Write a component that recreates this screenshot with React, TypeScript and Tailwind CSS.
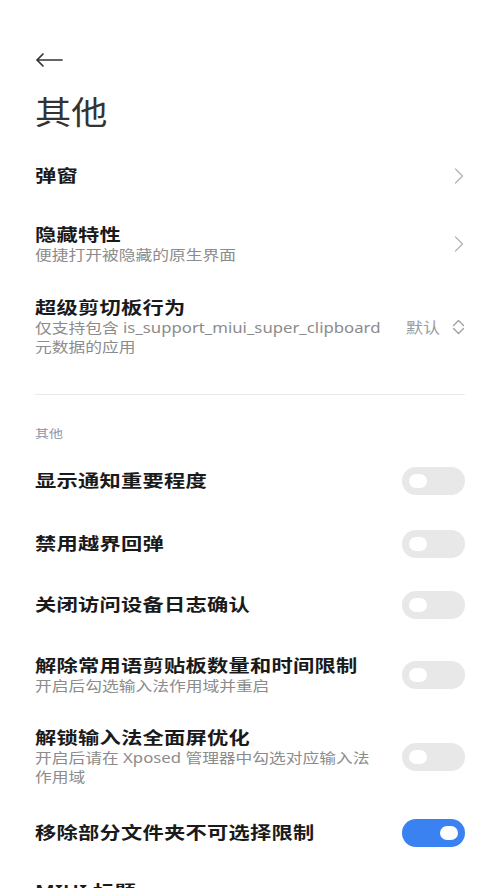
import React from "react";

const font = { fontFamily: '"Noto Sans", "Noto Sans CJK SC", sans-serif' };

function Chevron() {
  return (
    <svg width="10" height="16" viewBox="0 0 10 16" fill="none" className="mr-[1px]">
      <polyline points="1.5,1 8.5,8 1.5,15" stroke="#b5b5b5" strokeWidth="1.4" strokeLinecap="round" strokeLinejoin="round" />
    </svg>
  );
}

function UpDown() {
  return (
    <svg width="13" height="16" viewBox="0 0 13 16" fill="none">
      <polyline points="1.5,6.5 6.5,1.5 11.5,6.5" stroke="#a0a0a0" strokeWidth="1.4" strokeLinecap="round" strokeLinejoin="round" />
      <polyline points="1.5,9.5 6.5,14.5 11.5,9.5" stroke="#a0a0a0" strokeWidth="1.4" strokeLinecap="round" strokeLinejoin="round" />
    </svg>
  );
}

function Toggle({ on }: { on?: boolean }) {
  return (
    <div
      className={
        "flex h-[28px] w-[63px] shrink-0 items-center rounded-full px-[7px] " +
        (on ? "justify-end bg-[#3a81f1]" : "justify-start bg-[#e8e8e8]")
      }
    >
      <div className="h-[14px] w-[18px] rounded-full bg-white" />
    </div>
  );
}

function Title({ children }: { children: React.ReactNode }) {
  return (
    <div className="origin-left scale-x-[1.25] whitespace-nowrap text-[17px] leading-[22px] font-semibold tracking-[0.2px] text-[#1a1a1a]">
      {children}
    </div>
  );
}

function Sub({ children }: { children: React.ReactNode }) {
  return (
    <div className="origin-left scale-x-[1.24] whitespace-nowrap text-[13.5px] leading-[19px] text-[#8c8c8c]">
      {children}
    </div>
  );
}

export default function App() {
  return (
    <div className="min-h-[888px] w-[500px] overflow-hidden bg-white px-[35px]" style={font}>
      <div className="flex h-[28px] items-center mt-[46px]">
        <svg width="28" height="14" viewBox="0 0 28 14" fill="none">
          <path d="M27 7H2M8 1L2 7L8 13" stroke="#333" strokeWidth="1.7" strokeLinecap="round" strokeLinejoin="round" />
        </svg>
      </div>
      <div className="mt-[18px] origin-left scale-x-[1.13] text-[32px] leading-[40px] text-[#333]">其他</div>

      <div className="mt-[16px] flex h-[55px] items-center justify-between">
        <Title>弹窗</Title>
        <Chevron />
      </div>

      <div className="flex h-[82px] items-center justify-between">
        <div>
          <Title>隐藏特性</Title>
          <Sub>便捷打开被隐藏的原生界面</Sub>
        </div>
        <Chevron />
      </div>

      <div className="flex h-[84px] items-center justify-between">
        <div>
          <Title>超级剪切板行为</Title>
          <Sub>
            仅支持包含 is_support_miui_super_clipboard
            <br />
            元数据的应用
          </Sub>
        </div>
        <div className="flex items-center gap-[12px] self-start pt-[32px]">
          <span className="origin-right scale-x-[1.17] text-[14.5px] leading-[20px] text-[#9a9a9a]">默认</span>
          <UpDown />
        </div>
      </div>

      <div className="mt-[25px] h-px bg-[#ebebeb]" />

      <div className="mt-[31px] origin-left scale-x-[1.27] text-[11px] leading-[16px] text-[#8e94ae]">其他</div>

      <div className="mt-[7px] flex h-[64px] items-center justify-between">
        <Title>显示通知重要程度</Title>
        <Toggle />
      </div>

      <div className="flex h-[62px] items-center justify-between">
        <Title>禁用越界回弹</Title>
        <Toggle />
      </div>

      <div className="flex h-[60px] items-center justify-between">
        <Title>关闭访问设备日志确认</Title>
        <Toggle />
      </div>

      <div className="flex h-[80px] items-center justify-between">
        <div>
          <Title>解除常用语剪贴板数量和时间限制</Title>
          <Sub>开启后勾选输入法作用域并重启</Sub>
        </div>
        <Toggle />
      </div>

      <div className="flex h-[83px] items-center justify-between">
        <div>
          <Title>解锁输入法全面屏优化</Title>
          <Sub>
            开启后请在 Xposed 管理器中勾选对应输入法
            <br />
            作用域
          </Sub>
        </div>
        <Toggle />
      </div>

      <div className="flex h-[69px] items-center justify-between">
        <Title>移除部分文件夹不可选择限制</Title>
        <Toggle on />
      </div>

      <div className="flex h-[50px] items-center justify-between">
        <Title>MIUI 标题</Title>
      </div>
    </div>
  );
}
